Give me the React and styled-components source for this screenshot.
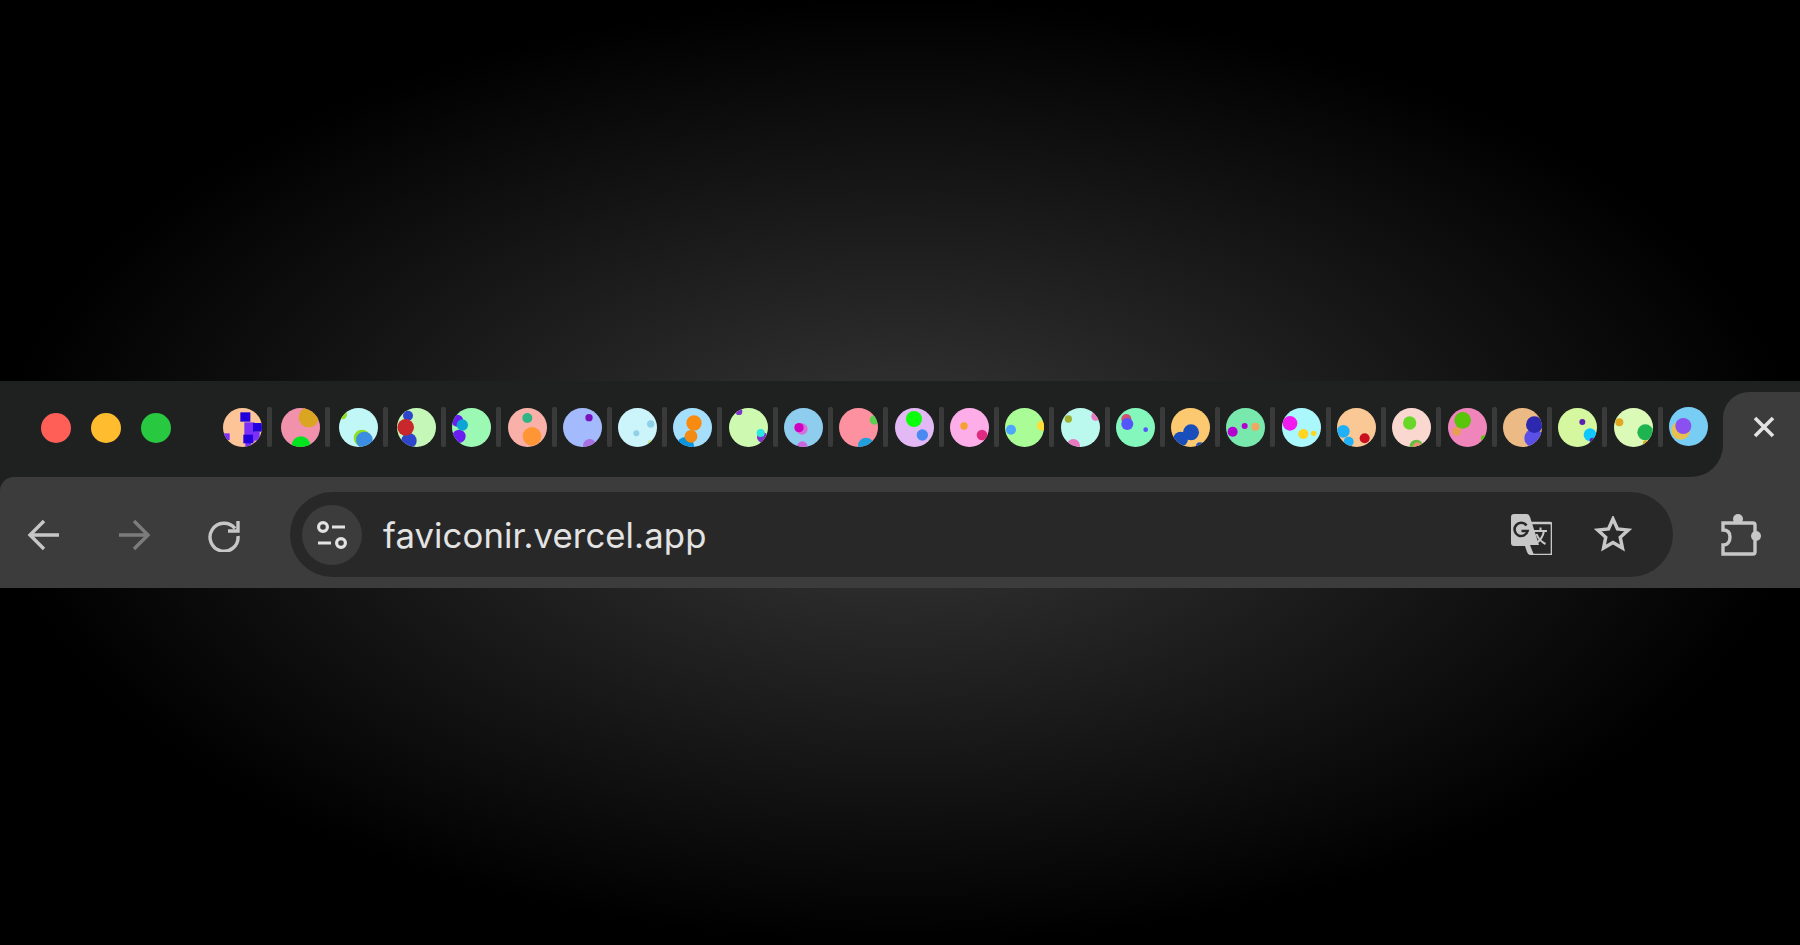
import React from "react";
import styled, { createGlobalStyle } from "styled-components";

const GlobalStyle = createGlobalStyle`
  html, body {
    margin: 0;
    height: 100%;
    background: #000;
  }
  #root {
    height: 100%;
  }
`;

const Page = styled.div`
  height: 945px;
  padding-top: 381px;
  box-sizing: border-box;
  overflow: hidden;
  background: radial-gradient(ellipse 900px 472px at 50% 50%, #393939 0%, #000 100%);
`;

const Browser = styled.div`
  width: 1800px;
  background: #1f2020;
`;

const Strip = styled.div`
  display: flex;
  height: 96px;
  background: #3c3c3c;
`;

const TabsArea = styled.div`
  flex: 1;
  min-width: 0;
  display: flex;
  align-items: flex-start;
  padding: 26px 0 0 41px;
  background: #1f2020;
  border-bottom-right-radius: 32px;
`;

const Lights = styled.div`
  display: flex;
  gap: 20px;
  margin-right: 52px;
  padding-top: 6px;
`;

const Light = styled.span`
  width: 30px;
  height: 30px;
  border-radius: 50%;
  background: ${(p) => p.$color};
`;

const Tab = styled.div`
  display: flex;
  align-items: center;
  gap: 5px;
  width: ${(p) => (p.$wide ? "58px" : "55.3px")};
  flex: none;
`;

const Favicon = styled.span`
  display: block;
  width: 39px;
  height: 39px;
  flex: none;
  border-radius: 50%;
  overflow: hidden;
  background: ${(p) => p.$bg};
  svg {
    display: block;
    width: 39px;
    height: 39px;
  }
`;

const Divider = styled.span`
  width: 5px;
  height: 40px;
  flex: none;
  border-radius: 2px;
  background: #3a3a3a;
`;

const CloseColumn = styled.div`
  width: 77px;
  flex: none;
  background: #1f2020;
`;

const CloseTab = styled.div`
  display: flex;
  align-items: flex-start;
  justify-content: center;
  height: 85px;
  margin-top: 11px;
  padding: 24px 0 0 5px;
  box-sizing: border-box;
  background: #3c3c3c;
  border-top-left-radius: 26px;
  color: #e3e3e3;
  svg {
    display: block;
    height: 22px;
    width: 22px;
  }
`;

const Toolbar = styled.div`
  display: flex;
  align-items: center;
  height: 111px;
  box-sizing: border-box;
  padding: 15px 39px 11px 14px;
  background: #3c3c3c;
  border-top-left-radius: 14px;
`;

const NavGroup = styled.div`
  display: flex;
  gap: 30px;
  margin-right: 36px;
`;

const NavButton = styled.div`
  display: flex;
  align-items: center;
  justify-content: center;
  width: 60px;
  height: 60px;
  color: ${(p) => (p.$dim ? "#7c7c7c" : "#c7c7c7")};
  svg {
    width: 34px;
    height: 34px;
  }
`;

const Address = styled.div`
  flex: 1;
  display: flex;
  align-items: center;
  height: 85px;
  padding: 0 41px 0 12px;
  border-radius: 43px;
  background: #282828;
`;

const SiteInfo = styled.div`
  display: flex;
  align-items: center;
  justify-content: center;
  width: 60px;
  height: 60px;
  margin-right: 21px;
  border-radius: 50%;
  background: #3c3c3c;
  color: #e3e3e3;
  svg {
    width: 32px;
    height: 32px;
  }
`;

const Url = styled.div`
  flex: 1;
  font-family: Inter, "Liberation Sans", sans-serif;
  font-size: 34.7px;
  color: #e3e3e3;
  letter-spacing: 0.1px;
`;

const AddressIcons = styled.div`
  display: flex;
  align-items: center;
  gap: 42px;
  color: #c7c7c7;
`;

const Extension = styled.div`
  width: 41px;
  height: 42px;
  margin-left: 47px;
  color: #c7c7c7;
`;

const blobs = [
  { bg: "#fdc498", shapes: [["r", 52, 13, 30, 28, "#2200dd"], ["r", 64, 43, 30, 60, "#7b2ff7"], ["r", 90, 71, 20, 27, "#7b2ff7"], ["r", 67, 103, 17, 14, "#7b2ff7"], ["r", 0, 76, 20, 20, "#7b2ff7"], ["r", 90, 45, 27, 26, "#2200dd"], ["r", 61, 80, 29, 26, "#2200dd"]] },
  { bg: "#f291ac", shapes: [[83, 28, 30, "#daa520"], [60, 113, 28, "#00e51e"]] },
  { bg: "#c2f7f7", shapes: [[10, 20, 14, "#90e020"], [69, 90, 25, "#90e020"], [76, 96, 25, "#3a8de0"]] },
  { bg: "#c5f7b8", shapes: [[33, 23, 15, "#2f45cc"], [36, 98, 23, "#2f45cc"], [26, 58, 25, "#c8282c"]] },
  { bg: "#9cf9b4", shapes: [[16, 38, 18, "#6a1ff0"], [21, 85, 20, "#6a1ff0"], [31, 51, 17, "#0aa5d5"]] },
  { bg: "#f8b0a8", shapes: [[58, 30, 15, "#2db585"], [72, 85, 28, "#ff9636"]] },
  { bg: "#a3bbfc", shapes: [[78, 29, 11, "#7a10c0"], [80, 113, 20, "#a870e0"]] },
  { bg: "#ccf4fb", shapes: [[98, 48, 11, "#8ed2ea"], [55, 76, 9, "#8ed2ea"], [96, 103, 6, "#c8e070"]] },
  { bg: "#a5dffb", shapes: [[37, 113, 26, "#0a95e0"], [63, 45, 23, "#f98a10"], [54, 85, 19, "#f28a14"]] },
  { bg: "#cdfab0", shapes: [[30, 11, 10, "#8035c8"], [100, 88, 16, "#8035c8"], [95, 75, 12, "#2de8e0"]] },
  { bg: "#8fcdee", shapes: [[54, 63, 17, "#d66fdc"], [45, 59, 14, "#d000c0"], [55, 116, 16, "#cc66dd"]] },
  { bg: "#fd919f", shapes: [[106, 36, 14, "#58d050"], [81, 113, 24, "#1fa0dd"]] },
  { bg: "#e2b9f4", shapes: [[57, 33, 24, "#0bff0b"], [82, 81, 17, "#4a8af0"]] },
  { bg: "#fdaee9", shapes: [[42, 54, 11, "#f5a030"], [96, 81, 16, "#e02a80"]] },
  { bg: "#aafc97", shapes: [[18, 65, 15, "#4da6ff"], [111, 53, 15, "#ffdd33"]] },
  { bg: "#bbf8ee", shapes: [[22, 33, 11, "#a0b030"], [104, 25, 13, "#e878c0"], [37, 113, 20, "#e878c0"]] },
  { bg: "#84f7bc", shapes: [[31, 33, 15, "#d05070"], [34, 48, 18, "#5555ff"], [89, 65, 7, "#5555ff"]] },
  { bg: "#fdc970", shapes: [[60, 73, 24, "#1a4fbb"], [29, 93, 22, "#1a4fbb"], [87, 115, 12, "#1a4fbb"]] },
  { bg: "#78e8ac", shapes: [[20, 71, 15, "#b400d0"], [56, 54, 9, "#b400d0"], [88, 56, 12, "#f0a860"]] },
  { bg: "#aaf8fb", shapes: [[24, 46, 22, "#f31af0"], [64, 78, 15, "#ffd520"], [95, 76, 8, "#ffd520"]] },
  { bg: "#f9c894", shapes: [[19, 70, 19, "#20b0f8"], [35, 101, 15, "#20b0f8"], [83, 91, 15, "#c81020"]] },
  { bg: "#fad8d0", shapes: [[53, 45, 20, "#68d828"], [73, 115, 20, "#60c040"], [76, 117, 14, "#f09070"]] },
  { bg: "#ef85bb", shapes: [[26, 70, 13, "#e8a050"], [44, 37, 25, "#58c40a"], [109, 92, 10, "#58c40a"]] },
  { bg: "#ecba84", shapes: [[92, 90, 28, "#5a50e8"], [94, 50, 25, "#2c28b0"]] },
  { bg: "#d5f7a0", shapes: [[73, 42, 9, "#5f1fb0"], [96, 80, 19, "#0fc8ff"], [103, 97, 8, "#5f1fb0"]] },
  { bg: "#dbf9b7", shapes: [[16, 43, 12, "#e0a820"], [95, 105, 8, "#e0a820"], [94, 73, 24, "#1eb450"]] },
  { bg: "#78cdf5", shapes: [[35, 70, 28, "#e8c050"], [43, 57, 24, "#8a50f0"]] },
];

const Shape = ({ data }) => {
  if (data[0] === "r") {
    const [, x, y, width, height, fill] = data;
    return <rect x={x} y={y} width={width} height={height} fill={fill} />;
  }
  const [cx, cy, r, fill] = data;
  return <circle cx={cx} cy={cy} r={r} fill={fill} />;
};

const BackIcon = () => (
  <svg viewBox="0 0 34 34" fill="none" stroke="currentColor" strokeWidth="3.4">
    <path d="M32 17H4M17 3L3 17l14 14" />
  </svg>
);

const ForwardIcon = () => (
  <svg viewBox="0 0 34 34" fill="none" stroke="currentColor" strokeWidth="3.4">
    <path d="M2 17h28M17 3l14 14-14 14" />
  </svg>
);

const ReloadIcon = () => (
  <svg viewBox="0 0 34 34" fill="none" stroke="currentColor" strokeWidth="3.4">
    <path d="M28 10.500A14 14 0 1 0 31 18" />
    <path d="M31 3v10H21" />
  </svg>
);

const TuneIcon = () => (
  <svg viewBox="0 0 32 32" fill="none" stroke="currentColor" strokeWidth="3.2">
    <circle cx="7" cy="8" r="4.4" />
    <path d="M16 8h13M2 24h13" />
    <circle cx="25" cy="24" r="4.4" />
  </svg>
);

const TranslateIcon = () => (
  <svg width="41" height="41" viewBox="0 0 41 41">
    <path d="M17 9h22a2 2 0 0 1 2 2v28a2 2 0 0 1-2 2H20" fill="none" stroke="currentColor" strokeWidth="2.6" />
    <path d="M3 0h13q2 0 3 3l9 28h-9l4 10h-4q-2 0-3-3l-2-6H3q-3 0-3-3V3q0-3 3-3z" fill="currentColor" />
    <path d="M15.500 11.500A6.600 6.600 0 1 0 16.600 17H10.500" fill="none" stroke="#282828" strokeWidth="2.6" />
    <path d="M23 17h13M29.500 13.500V17M33 17c-1 6-4 10-9 13M25.500 20c1.500 4 5 8 9 10" fill="none" stroke="currentColor" strokeWidth="2" />
  </svg>
);

const StarIcon = () => (
  <svg width="38" height="38" viewBox="2.500 4 33 33" fill="none" stroke="currentColor" strokeWidth="3">
    <path d="M19 6.500l3.900 8.700 9.400 1-7 6.300 1.900 9.300-8.200-4.700-8.200 4.700 1.900-9.300-7-6.300 9.400-1z" />
  </svg>
);

const PuzzleIcon = () => (
  <svg width="41" height="42" viewBox="0 0 41 42">
    <path d="M3 9h30a2 2 0 0 1 2 2v27a2 2 0 0 1-2 2H3v-9c5 0 7-4 7-8s-2-7-7-7z" fill="none" stroke="currentColor" strokeWidth="3.4" />
    <circle cx="18" cy="5" r="5" fill="currentColor" />
    <circle cx="36" cy="22" r="5" fill="currentColor" />
  </svg>
);

const CloseIcon = () => (
  <svg viewBox="0 0 22 22" fill="none" stroke="currentColor" strokeWidth="3.6">
    <path d="M2 2l18 18M20 2L2 20" />
  </svg>
);

const App = () => {
  return (
    <Page>
      <GlobalStyle />
      <Browser>
        <Strip>
          <TabsArea>
            <Lights>
              <Light $color="#ff5f57" />
              <Light $color="#febc2e" />
              <Light $color="#28c840" />
            </Lights>
            {blobs.map((icon, i) => (
              <Tab key={i} $wide={i < 3}>
                <Favicon $bg={icon.bg}>
                  <svg viewBox="0 0 117 117">
                    {icon.shapes.map((s, j) => (
                      <Shape key={j} data={s} />
                    ))}
                  </svg>
                </Favicon>
                {i < blobs.length - 1 && <Divider />}
              </Tab>
            ))}
          </TabsArea>
          <CloseColumn>
            <CloseTab>
              <CloseIcon />
            </CloseTab>
          </CloseColumn>
        </Strip>
        <Toolbar>
          <NavGroup>
            <NavButton>
              <BackIcon />
            </NavButton>
            <NavButton $dim>
              <ForwardIcon />
            </NavButton>
            <NavButton>
              <ReloadIcon />
            </NavButton>
          </NavGroup>
          <Address>
            <SiteInfo>
              <TuneIcon />
            </SiteInfo>
            <Url>faviconir.vercel.app</Url>
            <AddressIcons>
              <TranslateIcon />
              <StarIcon />
            </AddressIcons>
          </Address>
          <Extension>
            <PuzzleIcon />
          </Extension>
        </Toolbar>
      </Browser>
    </Page>
  );
};

export default App;
